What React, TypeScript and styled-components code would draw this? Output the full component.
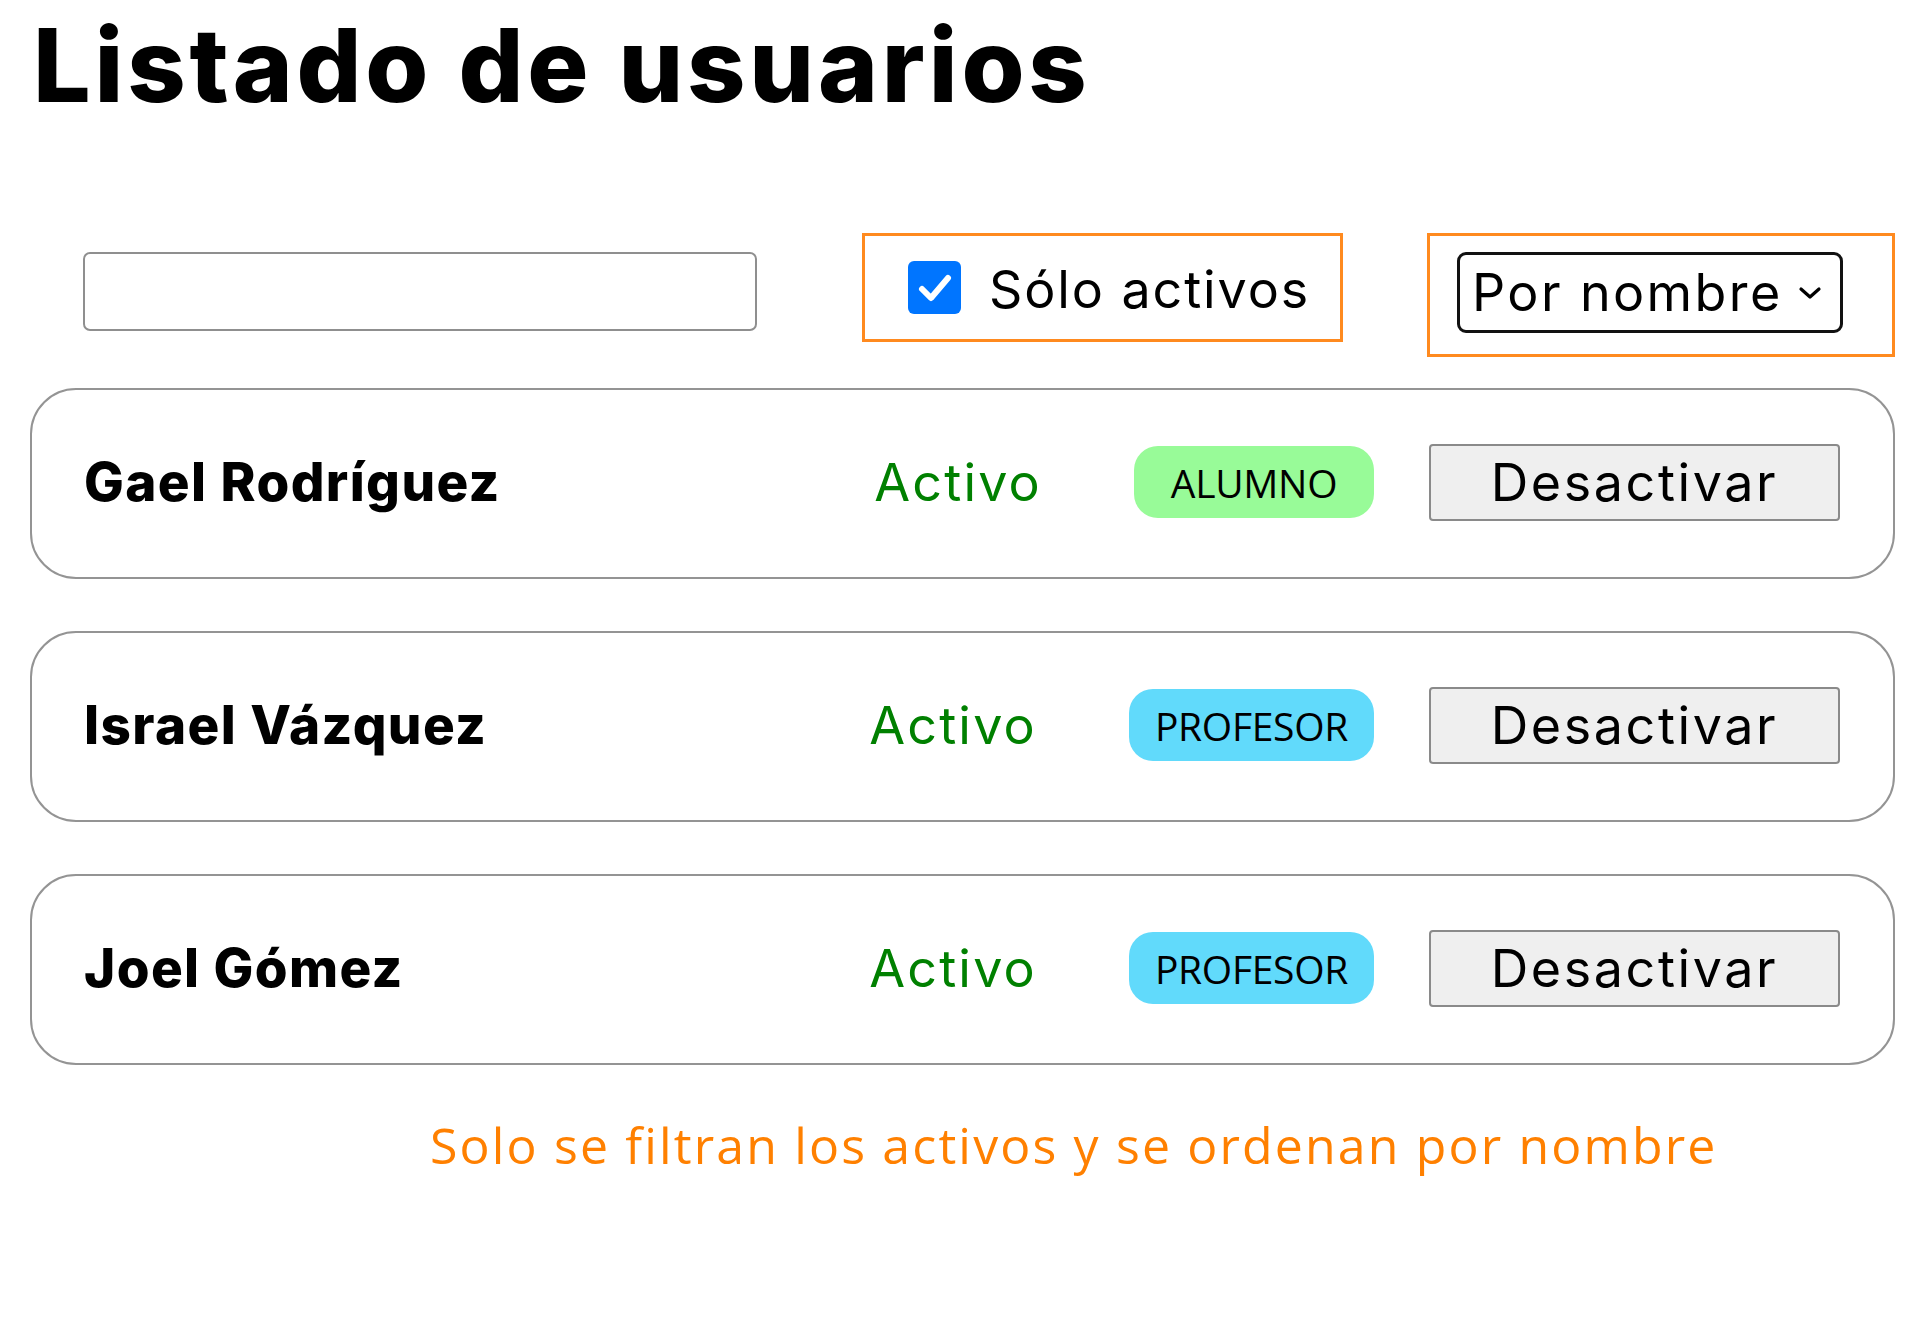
import { useState } from "react";
import styled, { createGlobalStyle } from "styled-components";

type Rol = "ALUMNO" | "PROFESOR";

interface Usuario {
  id: number;
  nombre: string;
  activo: boolean;
  rol: Rol;
}

const usuarios: Usuario[] = [
  { id: 1, nombre: "Gael Rodríguez", activo: true, rol: "ALUMNO" },
  { id: 2, nombre: "Israel Vázquez", activo: true, rol: "PROFESOR" },
  { id: 3, nombre: "Joel Gómez", activo: true, rol: "PROFESOR" },
];

const chevron =
  "data:image/svg+xml;utf8," +
  encodeURIComponent(
    '<svg xmlns="http://www.w3.org/2000/svg" width="28" height="16" viewBox="0 0 28 16"><path d="M5 4l9 8 9-8" fill="none" stroke="black" stroke-width="3.2" stroke-linecap="round" stroke-linejoin="round"/></svg>'
  );

export default function App() {
  const [soloActivos, setSoloActivos] = useState(true);
  const [orden, setOrden] = useState("nombre");
  const [busqueda, setBusqueda] = useState("");

  return (
    <>
      <GlobalStyle />
      <Page>
        <Title>Listado de usuarios</Title>
        <Toolbar>
          <SearchInput value={busqueda} onChange={(e) => setBusqueda(e.target.value)} />
          <FilterBox as="label">
            <HiddenCheck
              type="checkbox"
              checked={soloActivos}
              onChange={(e) => setSoloActivos(e.target.checked)}
            />
            <CheckMark $checked={soloActivos}>
              {soloActivos && (
                <svg width="36" height="32" viewBox="0 0 36 32">
                  <path d="M5 17l9 9L31 6" fill="none" stroke="#fff" strokeWidth="6" strokeLinecap="round" strokeLinejoin="round" />
                </svg>
              )}
            </CheckMark>
            <FilterLabel>Sólo activos</FilterLabel>
          </FilterBox>
          <SortBox>
            <SortSelect value={orden} onChange={(e) => setOrden(e.target.value)}>
              <option value="nombre">Por nombre</option>
              <option value="rol">Por rol</option>
            </SortSelect>
          </SortBox>
        </Toolbar>

        <List>
          {usuarios.map((u) => (
            <Card key={u.id}>
              <Name>{u.nombre}</Name>
              <Right>
                <Status>{u.activo ? "Activo" : "Inactivo"}</Status>
                <Badge $rol={u.rol}>{u.rol}</Badge>
                <ActionButton>Desactivar</ActionButton>
              </Right>
            </Card>
          ))}
        </List>

        <Note>Solo se filtran los activos y se ordenan por nombre</Note>
      </Page>
    </>
  );
}

const GlobalStyle = createGlobalStyle`
  body {
    margin: 0;
    background: #ffffff;
    font-family: "Inter", "Liberation Sans", sans-serif;
    color: #000;
  }
`;

const Page = styled.div`
  padding: 0 25px 60px 30px;
`;

const Title = styled.h1`
  margin: 14px 0 0 3px;
  font-size: 102px;
  line-height: 1;
  font-weight: 800;
  letter-spacing: 3.8px;
`;

const Toolbar = styled.div`
  display: flex;
  align-items: flex-start;
  margin-top: 117px;
`;

const SearchInput = styled.input`
  box-sizing: border-box;
  width: 674px;
  height: 79px;
  margin: 19px 0 0 53px;
  border: 2px solid #8f8f8f;
  border-radius: 7px;
  font-size: 40px;
  padding: 0 12px;
`;

const FilterBox = styled.div`
  box-sizing: border-box;
  display: flex;
  align-items: center;
  gap: 28px;
  width: 481px;
  height: 109px;
  margin-left: 105px;
  padding-left: 43px;
  border: 3px solid #ff8a1f;
  cursor: pointer;
`;

const HiddenCheck = styled.input`
  display: none;
`;

const CheckMark = styled.span<{ $checked: boolean }>`
  display: flex;
  align-items: center;
  justify-content: center;
  width: 53px;
  height: 53px;
  border-radius: 6px;
  background: ${(p) => (p.$checked ? "#0075ff" : "#fff")};
  border: ${(p) => (p.$checked ? "none" : "2px solid #767676")};
`;

const FilterLabel = styled.span`
  font-size: 52px;
  font-weight: 400;
  letter-spacing: 1.9px;
  margin-top: 4px;
`;

const SortBox = styled.div`
  box-sizing: border-box;
  width: 468px;
  height: 124px;
  margin-left: 84px;
  padding: 16px 0 0 27px;
  border: 3px solid #ff8a1f;
`;

const SortSelect = styled.select`
  box-sizing: border-box;
  width: 386px;
  height: 81px;
  padding: 0 50px 0 12px;
  appearance: none;
  border: 3px solid #111;
  border-radius: 9px;
  background: #fff url("${chevron}") no-repeat right 16px center / 28px 16px;
  font-family: "Inter", "Liberation Sans", sans-serif;
  font-size: 52px;
  letter-spacing: 2.4px;
  color: #000;
`;

const List = styled.div`
  display: flex;
  flex-direction: column;
  gap: 52px;
  margin-top: 31px;
`;

const Card = styled.div`
  box-sizing: border-box;
  display: flex;
  align-items: center;
  justify-content: space-between;
  height: 191px;
  padding: 0 53px 3px 52px;
  border: 2px solid #949494;
  border-radius: 46px;
`;

const Name = styled.span`
  font-size: 53px;
  font-weight: 800;
  letter-spacing: 1.4px;
`;

const Right = styled.div`
  display: flex;
  align-items: center;
`;

const Status = styled.span`
  margin-right: 92px;
  font-size: 52px;
  letter-spacing: 2.2px;
  color: #008000;
`;

const badgeColors: Record<Rol, string> = {
  ALUMNO: "#98fb98",
  PROFESOR: "#61dafb",
};

const Badge = styled.span<{ $rol: Rol }>`
  box-sizing: border-box;
  display: inline-flex;
  align-items: center;
  justify-content: center;
  min-width: 240px;
  height: 72px;
  padding: 0 26px;
  margin-right: 55px;
  border-radius: 24px;
  background: ${(p) => badgeColors[p.$rol]};
  font-family: "Open Sans", "Liberation Sans", sans-serif;
  font-size: 39px;
  letter-spacing: -0.3px;
`;

const ActionButton = styled.button`
  box-sizing: border-box;
  width: 411px;
  height: 77px;
  border: 2px solid #8a8a8a;
  border-radius: 4px;
  background: #efefef;
  font-family: "Inter", "Liberation Sans", sans-serif;
  font-size: 52px;
  letter-spacing: 2.6px;
  color: #000;
  cursor: pointer;
`;

const Note = styled.p`
  margin: 46px 0 0 400px;
  font-family: "Open Sans", "Liberation Sans", sans-serif;
  font-size: 50px;
  letter-spacing: 2.15px;
  color: #ff8000;
`;
